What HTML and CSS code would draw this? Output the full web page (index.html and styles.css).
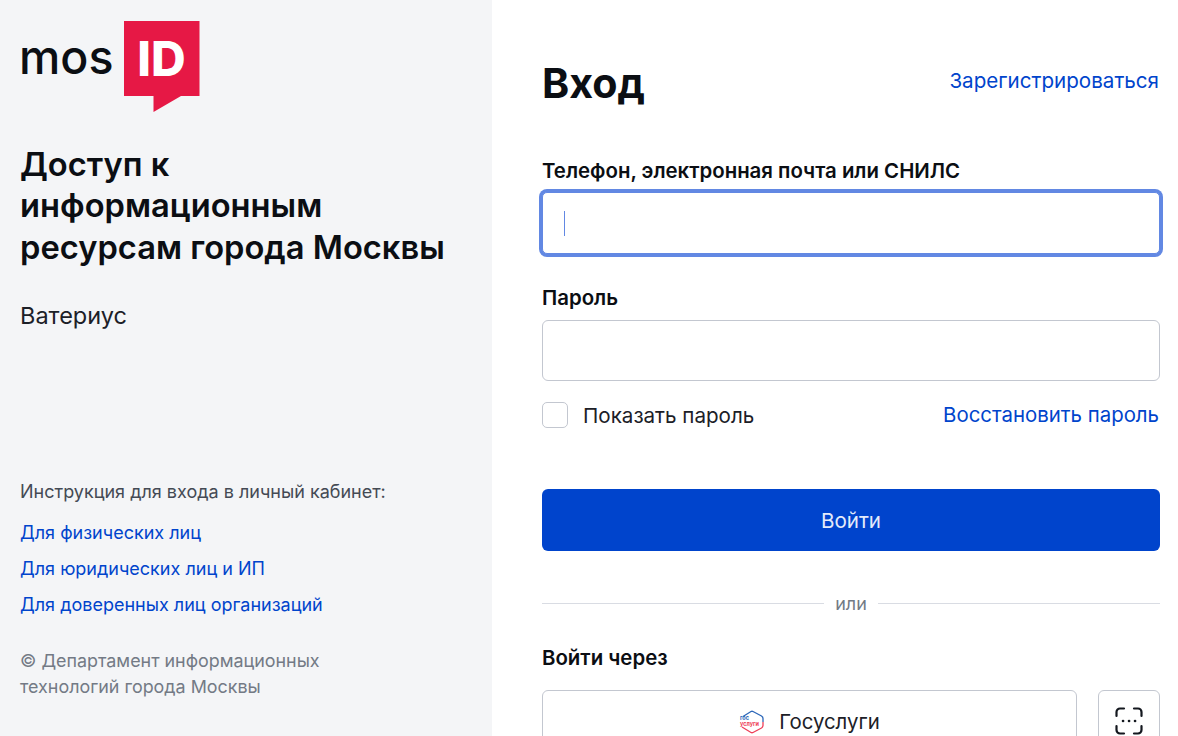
FILE: index.html
```html
<!DOCTYPE html>
<html lang="ru">
<head>
  <meta charset="UTF-8">
  <meta name="viewport" content="width=device-width, initial-scale=1.0">
  <title>Вход - mos.ru</title>
  <link rel="stylesheet" href="styles.css">
</head>
<body>
  <div class="page">
    <aside class="side">
      <div class="logo">
        <span class="logo-mos">mos</span>
        <svg class="logo-id" width="76" height="91" viewBox="0 0 76 91">
          <path d="M0 0H75.500V75H57L29.500 91V75H0Z" fill="#e61845"/>
          <text x="37.500" y="55" text-anchor="middle" class="logo-id-text">ID</text>
        </svg>
      </div>
      <h1 class="side-title">Доступ к информационным ресурсам города Москвы</h1>
      <div class="side-app">Ватериус</div>
      <div class="side-bottom">
        <div class="help-title">Инструкция для входа в личный кабинет:</div>
        <a class="help-link" href="#">Для физических лиц</a>
        <a class="help-link" href="#">Для юридических лиц и ИП</a>
        <a class="help-link" href="#">Для доверенных лиц организаций</a>
        <div class="copyright">© Департамент информационных технологий города Москвы</div>
      </div>
    </aside>

    <main class="main">
      <div class="head">
        <h2 class="head-title">Вход</h2>
        <a class="link" href="#">Зарегистрироваться</a>
      </div>

      <label class="label label-login">Телефон, электронная почта или СНИЛС</label>
      <div class="input input-focus"><span class="caret"></span></div>

      <label class="label label-pass">Пароль</label>
      <div class="input"></div>

      <div class="row-check">
        <span class="check"></span>
        <span class="check-text">Показать пароль</span>
        <a class="link link-restore" href="#">Восстановить пароль</a>
      </div>

      <button class="btn-primary">Войти</button>

      <div class="divider"><span>или</span></div>

      <div class="label label-via">Войти через</div>
      <div class="via-row">
        <div class="btn-via">
          <svg class="gos-icon" width="26" height="26" viewBox="0 0 26 26">
            <path d="M4 7.500L12 2.500Q13 2 14 2.500L22.500 7Q24 8 24 9.500V13" fill="none" stroke="#2b66b8" stroke-width="1.300"/>
            <path d="M3 18L12 23.500Q13 24 14 23.500L22.500 19Q24 18 24 16.500V13" fill="none" stroke="#ee3f58" stroke-width="1.300"/>
            <text x="1" y="10.500" class="gos-top">гос</text>
            <text x="1" y="16.500" class="gos-bottom">услуги</text>
          </svg>
          <span>Госуслуги</span>
        </div>
        <div class="btn-face">
          <svg width="28" height="28" viewBox="0 0 28 28" fill="none" stroke="#14181f" stroke-width="2.200" stroke-linecap="round">
            <path d="M1.500 9V5A3.500 3.500 0 0 1 5 1.500H9"/>
            <path d="M19 1.500H23A3.500 3.500 0 0 1 26.500 5V9"/>
            <path d="M1.500 19V23A3.500 3.500 0 0 0 5 26.500H9"/>
            <path d="M19 26.500H23A3.500 3.500 0 0 0 26.500 23V19"/>
            <path d="M8 14H8.100M14 14H14.100M20 14H20.100" stroke-width="2.600"/>
          </svg>
        </div>
      </div>
    </main>
  </div>
</body>
</html>
```

FILE: styles.css
```css
html, body {
  margin: 0;
  padding: 0;
  height: 100%;
  overflow: hidden;
}
body {
  font-family: Inter, "Noto Sans", sans-serif;
  color: #0b0e13;
  background: #fff;
}
a {
  text-decoration: none;
  color: #0044cc;
}
.page {
  display: flex;
  height: 736px;
  overflow: hidden;
}

/* left column */
.side {
  width: 492px;
  flex-shrink: 0;
  box-sizing: border-box;
  background: #f4f5f7;
  padding: 21px 40px 0 20px;
}
.logo {
  display: flex;
  align-items: flex-start;
  height: 91px;
}
.logo-mos {
  width: 105px;
  margin-left: -1px;
  font-size: 46.500px;
  font-weight: 500;
  line-height: 72px;
}
.logo-id-text {
  font-family: Inter, sans-serif;
  font-size: 48px;
  font-weight: 800;
  fill: #fff;
}
.side-title {
  margin: 32px 0 0;
  font-size: 32.700px;
  line-height: 41.300px;
  font-weight: 600;
}
.side-app {
  margin-top: 33px;
  font-size: 23.500px;
  line-height: 30px;
  color: #1c2027;
}
.side-bottom {
  margin-top: 149px;
}
.help-title {
  font-size: 18px;
  line-height: 24px;
  color: #444a54;
  margin-bottom: 17px;
}
.help-link {
  display: block;
  font-size: 18px;
  line-height: 24px;
  margin-bottom: 12px;
}
.copyright {
  margin-top: 31px;
  width: 340px;
  font-size: 17.900px;
  line-height: 26px;
  color: #737a85;
}

/* right column */
.main {
  flex: 1;
  box-sizing: border-box;
  padding: 58px 18px 0 50px;
}
.head {
  display: flex;
  justify-content: space-between;
  align-items: center;
  height: 50px;
}
.head-title {
  margin: 0;
  font-size: 41.200px;
  font-weight: 700;
  line-height: 50px;
}
.link {
  margin-right: 1px;
  font-size: 20.600px;
  line-height: 28px;
}
.head .link {
  margin-top: -4px;
}
.link-restore {
  font-size: 20.400px;
}
.label {
  display: block;
  font-size: 20.400px;
  font-weight: 600;
  line-height: 28px;
}
.label-login {
  margin-top: 49px;
  margin-bottom: 7px;
}
.label-pass {
  margin-top: 30px;
  margin-bottom: 8px;
}
.input {
  box-sizing: border-box;
  height: 61px;
  border: 1px solid #c3c7d0;
  border-radius: 6px;
  background: #fff;
  display: flex;
  align-items: center;
  padding-left: 21px;
}
.input-focus {
  height: 62px;
  border-color: #6288e3;
  border-radius: 5px;
  box-shadow: 0 0 0 3px #6288e3;
}
.caret {
  width: 1px;
  height: 25px;
  background: #6288e3;
}
.row-check {
  display: flex;
  align-items: center;
  margin-top: 21px;
  height: 26px;
}
.check {
  box-sizing: border-box;
  width: 26px;
  height: 26px;
  border: 1px solid #c3c7d0;
  border-radius: 5px;
  background: #fff;
}
.check-text {
  margin-left: 15px;
  font-size: 20.600px;
  flex: 1;
  color: #1c2027;
}
.btn-primary {
  display: block;
  width: 100%;
  height: 62px;
  margin-top: 61px;
  border: 0;
  border-radius: 6px;
  background: #0044cc;
  font-family: inherit;
  font-size: 20.600px;
  color: #e4ebfa;
}
.divider {
  display: flex;
  align-items: center;
  gap: 11px;
  margin-top: 42px;
  height: 20px;
  color: #737a85;
  font-size: 18px;
}
.divider::before, .divider::after {
  content: "";
  flex: 1;
  height: 1px;
  background: #d9dce3;
}
.label-via {
  margin-top: 31px;
}
.via-row {
  display: flex;
  gap: 21px;
  margin-top: 18px;
}
.btn-via {
  flex: 1;
  box-sizing: border-box;
  height: 62px;
  border: 1px solid #c3c7d0;
  border-radius: 6px;
  display: flex;
  align-items: center;
  justify-content: center;
  gap: 14px;
  font-size: 20.400px;
  color: #1c2027;
}
.gos-icon {
  margin-top: 2px;
}
.gos-top {
  font-family: Inter, sans-serif;
  font-size: 5.500px;
  font-weight: 700;
  fill: #2b66b8;
}
.gos-bottom {
  font-family: Inter, sans-serif;
  font-size: 5.500px;
  font-weight: 700;
  fill: #ee3f58;
}
.btn-face {
  box-sizing: border-box;
  width: 62px;
  height: 62px;
  border: 1px solid #c3c7d0;
  border-radius: 6px;
  display: flex;
  align-items: center;
  justify-content: center;
}
```
